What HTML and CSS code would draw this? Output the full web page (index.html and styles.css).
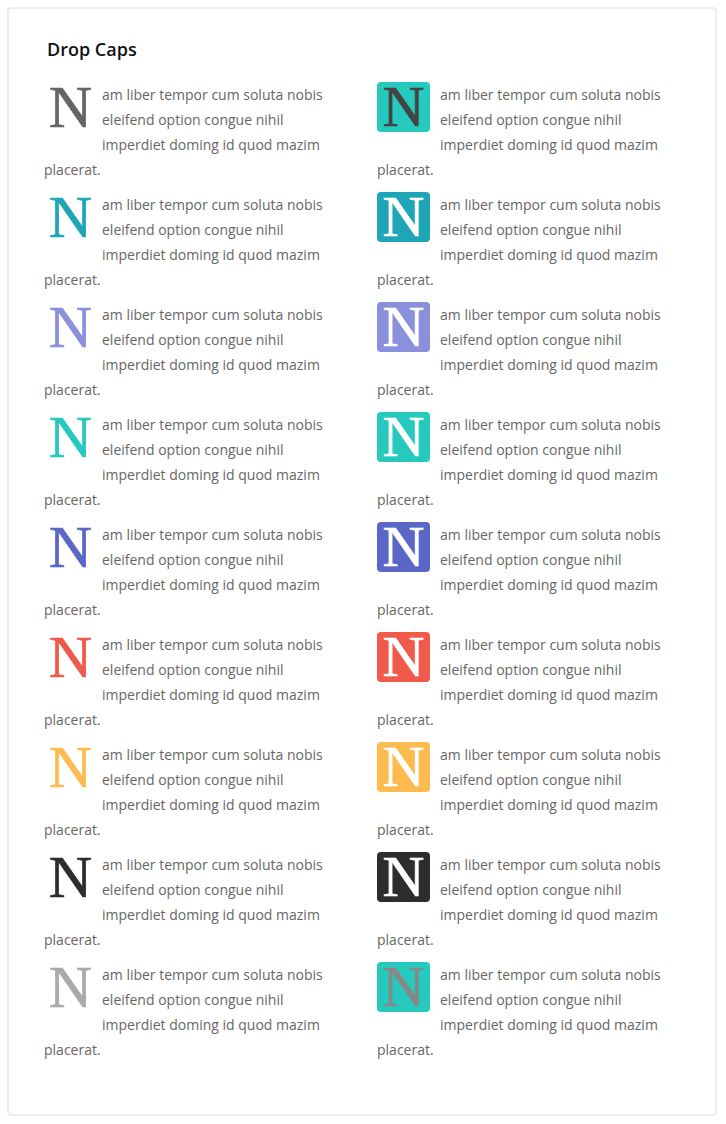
FILE: index.html
```html
<!DOCTYPE html>
<html>
<head>
<meta charset="utf-8">
<link rel="stylesheet" href="styles.css">
</head>
<body>
<div class="card">
  <h4 class="title">Drop Caps</h4>
  <div class="grid">
    <div class="col">
      <p><span class="cap c-gray">N</span>am liber tempor cum soluta nobis eleifend option congue nihil imperdiet doming id quod mazim placerat.</p>
      <p><span class="cap c-blue">N</span>am liber tempor cum soluta nobis eleifend option congue nihil imperdiet doming id quod mazim placerat.</p>
      <p><span class="cap c-lav">N</span>am liber tempor cum soluta nobis eleifend option congue nihil imperdiet doming id quod mazim placerat.</p>
      <p><span class="cap c-teal">N</span>am liber tempor cum soluta nobis eleifend option congue nihil imperdiet doming id quod mazim placerat.</p>
      <p><span class="cap c-indigo">N</span>am liber tempor cum soluta nobis eleifend option congue nihil imperdiet doming id quod mazim placerat.</p>
      <p><span class="cap c-red">N</span>am liber tempor cum soluta nobis eleifend option congue nihil imperdiet doming id quod mazim placerat.</p>
      <p><span class="cap c-yellow">N</span>am liber tempor cum soluta nobis eleifend option congue nihil imperdiet doming id quod mazim placerat.</p>
      <p><span class="cap c-dark">N</span>am liber tempor cum soluta nobis eleifend option congue nihil imperdiet doming id quod mazim placerat.</p>
      <p><span class="cap c-light">N</span>am liber tempor cum soluta nobis eleifend option congue nihil imperdiet doming id quod mazim placerat.</p>
    </div>
    <div class="col">
      <p><span class="cap boxed b-teal-dark">N</span>am liber tempor cum soluta nobis eleifend option congue nihil imperdiet doming id quod mazim placerat.</p>
      <p><span class="cap boxed b-blue">N</span>am liber tempor cum soluta nobis eleifend option congue nihil imperdiet doming id quod mazim placerat.</p>
      <p><span class="cap boxed b-lav">N</span>am liber tempor cum soluta nobis eleifend option congue nihil imperdiet doming id quod mazim placerat.</p>
      <p><span class="cap boxed b-teal">N</span>am liber tempor cum soluta nobis eleifend option congue nihil imperdiet doming id quod mazim placerat.</p>
      <p><span class="cap boxed b-indigo">N</span>am liber tempor cum soluta nobis eleifend option congue nihil imperdiet doming id quod mazim placerat.</p>
      <p><span class="cap boxed b-red">N</span>am liber tempor cum soluta nobis eleifend option congue nihil imperdiet doming id quod mazim placerat.</p>
      <p><span class="cap boxed b-yellow">N</span>am liber tempor cum soluta nobis eleifend option congue nihil imperdiet doming id quod mazim placerat.</p>
      <p><span class="cap boxed b-dark">N</span>am liber tempor cum soluta nobis eleifend option congue nihil imperdiet doming id quod mazim placerat.</p>
      <p><span class="cap boxed b-teal-gray">N</span>am liber tempor cum soluta nobis eleifend option congue nihil imperdiet doming id quod mazim placerat.</p>
    </div>
  </div>
</div>
</body>
</html>
```

FILE: styles.css
```css
html, body {
  margin: 0;
  padding: 0;
  background: #fff;
}

body {
  padding: 7px 9px 0 7px;
  font-family: "Open Sans", "Noto Sans", sans-serif;
}

.card {
  box-sizing: border-box;
  width: 710px;
  height: 1109px;
  border: 2px solid #eeeeee;
  border-radius: 4px;
  padding: 29px 35px 0 35px;
}

.title {
  margin: 0 0 22px 0;
  padding-left: 3px;
  font-size: 18px;
  line-height: 22px;
  font-weight: 600;
  color: #111;
}

.grid {
  display: grid;
  grid-template-columns: 303px 303px;
  column-gap: 30px;
}

.col p {
  margin: 0 0 10px 0;
  font-size: 14px;
  line-height: 25px;
  color: #666;
}

.cap {
  float: left;
  width: 53px;
  height: 50px;
  margin: 0 5px 10px 0;
  font-family: "Liberation Serif", "Times New Roman", serif;
  font-weight: 400;
  font-size: 60px;
  line-height: 50px;
  text-align: center;
  -webkit-text-stroke: 0.7px currentColor;
}

.cap.boxed {
  margin-right: 10px;
  border-radius: 4px;
  font-size: 58px;
  line-height: 49px;
  color: #fff;
}

.c-gray { color: #666666; }
.c-blue { color: #1fa5b8; }
.c-lav { color: #8a90db; }
.c-teal { color: #26c9bd; }
.c-indigo { color: #5b67c7; }
.c-red { color: #ef5a4a; }
.c-yellow { color: #fdbb4f; }
.c-dark { color: #2d2d2f; }
.c-light { color: #aaaaaa; }

.b-blue { background: #1fa5b8; }
.b-lav { background: #8a90db; }
.b-teal { background: #26c9bd; }
.b-indigo { background: #5b67c7; }
.b-red { background: #ef5a4a; }
.b-yellow { background: #fdbb4f; }
.b-dark { background: #2d2d2f; }
.cap.b-teal-dark { background: #26c9bd; color: #444444; }
.cap.b-teal-gray { background: #26c9bd; color: #888888; }
```
